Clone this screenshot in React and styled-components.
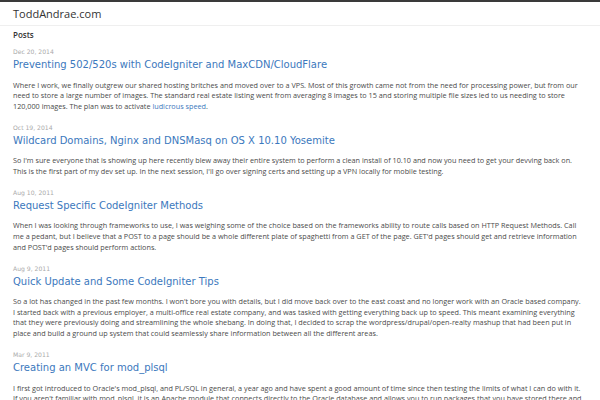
import React from "react";
import styled, { createGlobalStyle } from "styled-components";

const Global = createGlobalStyle`
  html, body { margin: 0; padding: 0; background: #fff; }
  body { overflow: hidden; }
`;

const Page = styled.div`
  width: 600px;
  height: 400px;
  overflow: hidden;
  border-top: 2px solid #3a3a3a;
  box-sizing: border-box;
`;

const Header = styled.header`
  height: 23px;
  border-bottom: 1px solid #efefef;
  padding: 0 13px;
  display: flex;
  align-items: center;
`;

const Brand = styled.a`
  font-family: "Open Sans", sans-serif;
  font-size: 11px;
  line-height: 14px;
  padding-top: 1px;
  color: #333;
  text-decoration: none;
`;

const Main = styled.main`
  padding: 3px 16px 0 13px;
`;

const SectionTitle = styled.h2`
  margin: 0 0 6px;
  font-family: "Open Sans", sans-serif;
  font-size: 8px;
  line-height: 12px;
  font-weight: 600;
  color: #333;
`;

const Post = styled.article`
  margin-bottom: 11.5px;
`;

const DateLine = styled.div`
  font-family: "DejaVu Sans", sans-serif;
  font-size: 6.1px;
  color: #aaa;
  line-height: 10px;
`;

const Title = styled.h3`
  margin: 0 0 7.5px;
  font-family: "DejaVu Sans", sans-serif;
  font-weight: normal;
  font-size: 10px;
  line-height: 15px;
  color: #3b78bd;
`;

const Body = styled.p`
  margin: 0;
  font-family: "Open Sans", sans-serif;
  font-size: 7.25px;
  line-height: 10.6px;
  color: #4a4a4a;
`;

const Link = styled.a`
  color: #3b78bd;
  text-decoration: none;
`;

const posts = [
  {
    date: "Dec 20, 2014",
    title: "Preventing 502/520s with CodeIgniter and MaxCDN/CloudFlare",
    body: (
      <>
        Where I work, we finally outgrew our shared hosting britches and moved over to a VPS. Most of this growth came not from the need for processing power, but from our need to store a large number of images. The standard real estate listing went from averaging 8 images to 15 and storing multiple file sizes led to us needing to store 120,000 images. The plan was to activate <Link href="#">ludicrous speed</Link>.
      </>
    ),
  },
  {
    date: "Oct 19, 2014",
    title: "Wildcard Domains, Nginx and DNSMasq on OS X 10.10 Yosemite",
    body: "So I'm sure everyone that is showing up here recently blew away their entire system to perform a clean install of 10.10 and now you need to get your devving back on. This is the first part of my dev set up. In the next session, I'll go over signing certs and setting up a VPN locally for mobile testing.",
  },
  {
    date: "Aug 10, 2011",
    title: "Request Specific CodeIgniter Methods",
    body: "When I was looking through frameworks to use, I was weighing some of the choice based on the frameworks ability to route calls based on HTTP Request Methods. Call me a pedant, but I believe that a POST to a page should be a whole different plate of spaghetti from a GET of the page. GET'd pages should get and retrieve information and POST'd pages should perform actions.",
  },
  {
    date: "Aug 9, 2011",
    title: "Quick Update and Some CodeIgniter Tips",
    body: "So a lot has changed in the past few months. I won't bore you with details, but I did move back over to the east coast and no longer work with an Oracle based company. I started back with a previous employer, a multi-office real estate company, and was tasked with getting everything back up to speed. This meant examining everything that they were previously doing and streamlining the whole shebang. In doing that, I decided to scrap the wordpress/drupal/open-realty mashup that had been put in place and build a ground up system that could seamlessly share information between all the different areas.",
  },
  {
    date: "Mar 9, 2011",
    title: "Creating an MVC for mod_plsql",
    body: "I first got introduced to Oracle's mod_plsql, and PL/SQL in general, a year ago and have spent a good amount of time since then testing the limits of what I can do with it. If you aren't familiar with mod_plsql, it is an Apache module that connects directly to the Oracle database and allows you to run packages that you have stored there and output the results to the browser.",
  },
];

export default function App() {
  return (
    <Page>
      <Global />
      <Header>
        <Brand href="#">ToddAndrae.com</Brand>
      </Header>
      <Main>
        <SectionTitle>Posts</SectionTitle>
        {posts.map((p) => (
          <Post key={p.date}>
            <DateLine>{p.date}</DateLine>
            <Title>{p.title}</Title>
            <Body>{p.body}</Body>
          </Post>
        ))}
      </Main>
    </Page>
  );
}
